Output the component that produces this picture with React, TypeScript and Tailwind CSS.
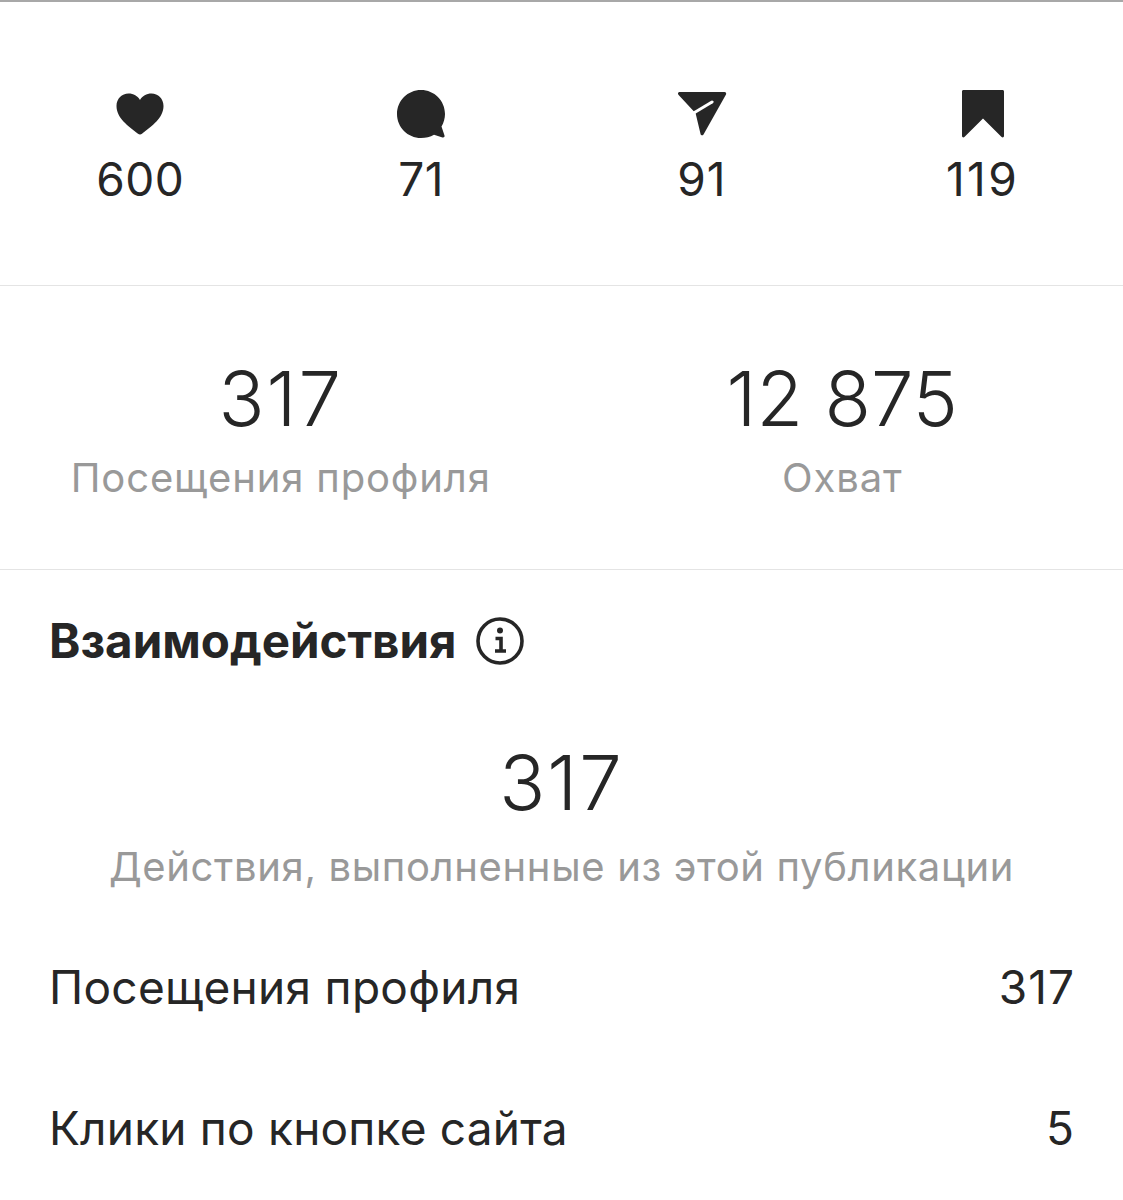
const Heart = () => (
  <svg width="50" height="44" viewBox="0 0 50 44" className="block">
    <path d="M25 42.5 C24.3 42.5 23.6 42.2 23 41.7 C13 34 1.5 26 1.5 14 C1.5 6.5 7 1.5 13.5 1.5 C18.5 1.5 22.7 4 25 8 C27.3 4 31.5 1.5 36.5 1.5 C43 1.5 48.5 6.5 48.5 14 C48.5 26 37 34 27 41.7 C26.4 42.2 25.7 42.5 25 42.5 Z" fill="#262626" />
  </svg>
);
const Bubble = () => (
  <svg width="50" height="50" viewBox="0 0 50 50" className="block">
    <path d="M25 1 C38.3 1 49 11.7 49 25 C49 29.6 47.7 33.8 45.5 37.5 L48.5 46.5 C48.9 47.8 47.8 48.8 46.5 48.4 L38 45.7 C34.2 47.8 29.8 49 25 49 C11.7 49 1 38.3 1 25 C1 11.7 11.7 1 25 1 Z" fill="#262626" />
  </svg>
);
const Send = () => (
  <svg width="50" height="46" viewBox="0 0 50 46" className="block">
    <path d="M2.5 1 H47.5 C48.8 1 49.6 2.4 49 3.5 L26.5 43.5 C25.8 44.8 24 44.6 23.6 43.2 L18.6 22.2 L1.4 3.7 C0.5 2.7 1.1 1 2.5 1 Z" fill="#262626" />
    <path d="M17.5 21.5 L35 11" stroke="#fff" strokeWidth="3" strokeLinecap="round" fill="none" />
  </svg>
);
const Bookmark = () => (
  <svg width="44" height="50" viewBox="0 0 44 50" className="block">
    <path d="M2.5 1 H41.5 C42.4 1 43 1.6 43 2.5 V47 C43 48.3 41.6 48.9 40.6 48 L22 29.5 L3.4 48 C2.4 48.9 1 48.3 1 47 V2.5 C1 1.6 1.6 1 2.5 1 Z" fill="#262626" />
  </svg>
);

function Stat({ icon, value, className }: { icon: React.ReactNode; value: string; className: string }) {
  return (
    <div className="flex flex-col items-center">
      <div className="flex h-[52px] items-center justify-center">{icon}</div>
      <div className={`mt-[12px] text-[46px] leading-[54px] text-[#262626] ${className}`}>{value}</div>
    </div>
  );
}

function Metric({ value, label, className }: { value: string; label: string; className: string }) {
  return (
    <div className="flex flex-col items-center">
      <div className={`text-[76px] leading-[92px] font-light text-[#262626] ${className}`}>{value}</div>
      <div className="mt-[10px] text-[40px] leading-[48px] tracking-[0.85px] text-[#999999]">{label}</div>
    </div>
  );
}

function Row({ label, value, className, labelClass }: { label: string; value: string; className: string; labelClass: string }) {
  return (
    <div className={`flex items-center justify-between ${className}`}>
      <span className={`text-[46px] leading-[54px] text-[#262626] ${labelClass}`}>{label}</span>
      <span className="text-[46px] leading-[54px] tracking-[1px] text-[#262626] mr-[-1px]">{value}</span>
    </div>
  );
}

export default function App() {
  return (
    <div className="h-[1200px] w-[1123px] overflow-hidden bg-white font-['Inter','Noto_Sans',sans-serif] border-t-2 border-[#a8a8a8]">
      <div className="grid h-[284px] grid-cols-4 border-b border-[#e4e4e4] pt-[86px]">
        <Stat icon={<Heart />} value="600" className="tracking-[0.5px]" />
        <Stat icon={<Bubble />} value="71" className="tracking-[0.5px]" />
        <Stat icon={<Send />} value="91" className="tracking-[1px]" />
        <Stat icon={<Bookmark />} value="119" className="tracking-[2.5px]" />
      </div>
      <div className="grid h-[284px] grid-cols-2 border-b border-[#e4e4e4] pt-[66px]">
        <Metric value="317" label="Посещения профиля" className="tracking-[2px]" />
        <Metric value="12 875" label="Охват" className="tracking-[0px]" />
      </div>
      <div className="px-[49px]">
        <div className="mt-[44px] flex items-center gap-[20px]">
          <h2 className="text-[47.5px] leading-[54px] font-bold text-[#262626]">Взаимодействия</h2>
          <svg width="48" height="48" viewBox="0 0 48 48" className="block">
            <circle cx="24" cy="24" r="22" fill="none" stroke="#262626" strokeWidth="3.6" />
            <circle cx="24" cy="13.5" r="3" fill="#262626" />
            <path d="M19.5 21.5 H25 V33.5 M19 34 H30" fill="none" stroke="#262626" strokeWidth="3.6" />
          </svg>
        </div>
        <div className="mt-[68px] flex flex-col items-center">
          <div className="text-[76px] leading-[92px] font-light tracking-[2px] text-[#262626]">317</div>
          <div className="mt-[15px] text-[40px] leading-[48px] tracking-[0.65px] text-[#999999]">Действия, выполненные из этой публикации</div>
        </div>
        <Row className="mt-[69px]" labelClass="tracking-[0.3px]" label="Посещения профиля" value="317" />
        <Row className="mt-[87px]" labelClass="tracking-[0.2px]" label="Клики по кнопке сайта" value="5" />
      </div>
    </div>
  );
}
